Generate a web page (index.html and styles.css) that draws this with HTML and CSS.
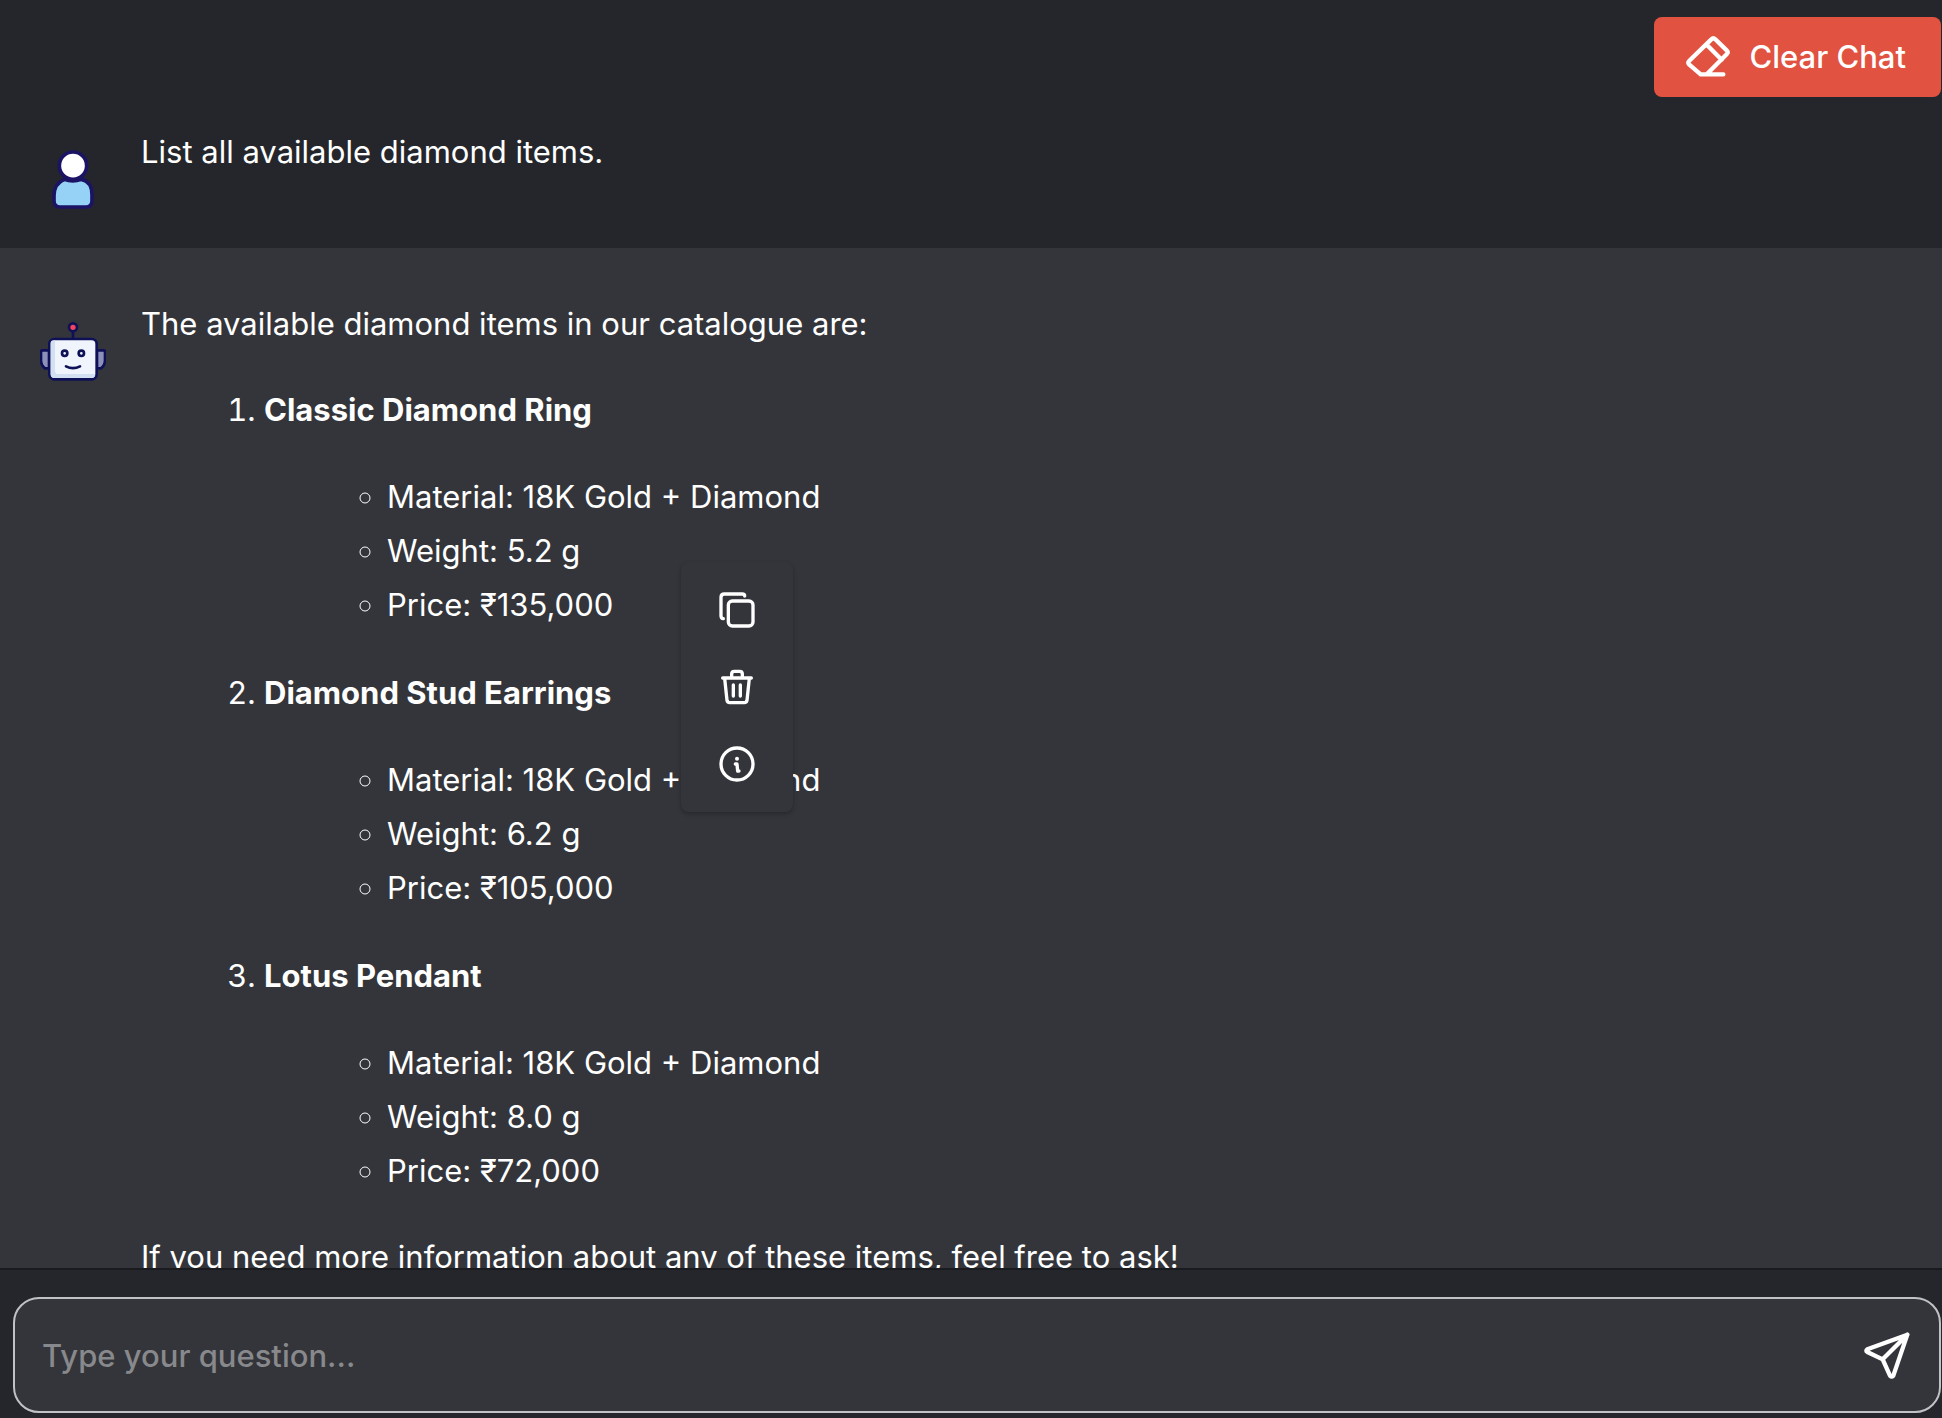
FILE: index.html
```html
<!DOCTYPE html>
<html lang="en">

<head>
    <meta charset="UTF-8">
    <meta name="viewport" content="width=device-width, initial-scale=1.0">
    <title>Catalogue Chat</title>
    <link rel="stylesheet" href="styles.css">
</head>

<body>
    <main class="chat">
        <header class="toolbar">
            <button class="clear" type="button">
                <svg class="clear-icon" viewBox="136 104 132 132" aria-hidden="true">
                    <path d="M248 222H180L146 193Q140 187 146 181L212 117Q218 111 224 117L258 150Q264 156 258 162L199 221M199 134L243 178" />
                </svg>
                Clear Chat
            </button>
        </header>
        <section class="message user">
            <svg class="avatar" viewBox="0 10 198 198" aria-hidden="true">
                <path class="user-body" d="M73 119Q98 128 124 119C145 123 156 142 156 165V184Q156 202 138 202H60Q42 202 42 184V168C42 142 54 127 73 119Z" />
                <ellipse class="user-head" cx="99" cy="78" rx="41" ry="41" />
            </svg>
            <div class="text">
                <p>List all available diamond items.</p>
            </div>
        </section>
        <section class="message bot">
            <svg class="avatar" viewBox="30 45 198 198" aria-hidden="true">
                <g class="bot-lines">
                    <path class="bot-ear" d="M57 151H38Q33 151 33 156V181Q33 196 45 205H57ZM201 151H220Q225 151 225 156V181Q225 196 213 205H201Z" />
                    <path d="M129 94V116" />
                    <circle class="bot-bulb" cx="129" cy="82" r="12" />
                    <rect class="bot-face" x="58" y="117" width="142" height="121" rx="15" />
                    <circle cx="104" cy="160" r="8" />
                    <circle cx="154" cy="160" r="8" />
                    <path d="M108 199Q129 210 150 199" />
                </g>
                <path class="bot-shade" d="M62 128V223Q62 234 74 234H184Q195 234 195 222H84Q75 222 75 212V121Q62 121 62 128Z" />
            </svg>
            <div class="text">
                <p>The available diamond items in our catalogue are:</p>
                <ol>
                    <li>
                        <strong>Classic Diamond Ring</strong>
                        <ul>
                            <li>Material: 18K Gold + Diamond</li>
                            <li>Weight: 5.2 g</li>
                            <li>Price: ₹135,000</li>
                        </ul>
                    </li>
                    <li>
                        <strong>Diamond Stud Earrings</strong>
                        <ul>
                            <li>Material: 18K Gold + Diamond</li>
                            <li>Weight: 6.2 g</li>
                            <li>Price: ₹105,000</li>
                        </ul>
                    </li>
                    <li>
                        <strong>Lotus Pendant</strong>
                        <ul>
                            <li>Material: 18K Gold + Diamond</li>
                            <li>Weight: 8.0 g</li>
                            <li>Price: ₹72,000</li>
                        </ul>
                    </li>
                </ol>
                <p>If you need more information about any of these items, feel free to ask!</p>
            </div>
            <div class="menu">
                <button type="button" aria-label="Copy">
                    <svg viewBox="171 151 120 120" aria-hidden="true">
                        <rect x="205" y="184" width="74" height="75" rx="12" />
                        <path d="M254 169Q254 163 247 163H193Q183 163 183 173V228Q183 236 190 237" />
                    </svg>
                </button>
                <button type="button" aria-label="Delete">
                    <svg viewBox="171 382 120 120" aria-hidden="true">
                        <path d="M188 415H274M194 416L201 482Q202 489 209 489H253Q260 489 261 482L268 416M215 413V403Q215 395 223 395H239Q247 395 247 403V413M220 436V469M241 436V469" />
                    </svg>
                </button>
                <button type="button" aria-label="Info">
                    <svg viewBox="171 613 120 120" aria-hidden="true">
                        <circle cx="231" cy="673" r="48" />
                        <path d="M226 673H231L233 694H237" />
                        <circle class="dot" cx="231" cy="657" r="6" />
                    </svg>
                </button>
            </div>
        </section>
    </main>
    <footer class="footer">
        <form class="ask">
            <input class="ask-input" type="text" placeholder="Type your question..." aria-label="Your question">
            <button class="send" type="button" aria-label="Send">
                <svg viewBox="250 243 144 144" aria-hidden="true">
                    <path d="M383 254L263 298Q257 302 263 306L309 328L331 377Q336 382 341 377ZM309 328L383 254" />
                </svg>
            </button>
        </form>
    </footer>
</body>

</html>
```
FILE: styles.css
```css
* {
    box-sizing: border-box;
    margin: 0;
    padding: 0;
}

body {
    display: flex;
    flex-direction: column;
    height: 100vh;
    background-color: #25262b;
    color: #fff;
    font-family: Inter, "Noto Sans", sans-serif;
    font-size: 31px;
    line-height: 54px;
}

button {
    border: none;
    background: none;
    color: inherit;
    font: inherit;
    cursor: pointer;
}

svg {
    display: block;
    fill: none;
    stroke: #fff;
    stroke-width: 10;
    stroke-linecap: round;
    stroke-linejoin: round;
}

.chat {
    flex: 1;
    min-height: 0;
    overflow: hidden;
}

.toolbar {
    display: flex;
    justify-content: flex-end;
    padding: 17px 1px 28px;
}

.clear {
    display: flex;
    align-items: center;
    gap: 20px;
    height: 80px;
    padding: 0 35px 0 32px;
    border-radius: 8px;
    background-color: #e15241;
    font-weight: 500;
}

.clear-icon {
    width: 44px;
    height: 44px;
    stroke-width: 13;
}

.message {
    position: relative;
    display: flex;
    gap: 35px;
    padding: 0 40px 39px;
}

.bot {
    padding-top: 49px;
    background-color: #34353a;
}

.avatar {
    flex: none;
    width: 66px;
    height: 66px;
    margin-top: 18px;
}

.user-head,
.user-body {
    fill: #fff;
    stroke: #1b1464;
    stroke-width: 11;
}

.user-body {
    fill: #96d2f6;
}

.bot-lines {
    stroke: #0f1157;
    stroke-width: 8;
}

.bot-ear {
    fill: #8d90b8;
}

.bot-bulb {
    fill: #f5455c;
}

.bot-face {
    fill: #f0f4fc;
}

.bot-shade {
    fill: #d3e0f2;
    stroke: none;
}

.text ol {
    margin: 32px 0;
    padding-left: 123px;
}

.text ol > li + li {
    margin-top: 34px;
}

.text ul {
    margin-top: 33px;
    padding-left: 123px;
    list-style: circle;
}

/* message actions, floats over the text */
.menu {
    position: absolute;
    top: 314px;
    left: 681px;
    display: flex;
    flex-direction: column;
    gap: 37px;
    padding: 28px 36px;
    border-radius: 8px;
    background-color: #34353a;
    box-shadow: 0 2px 4px rgba(0, 0, 0, .25);
}

.menu svg {
    width: 40px;
    height: 40px;
}

.dot {
    fill: #fff;
    stroke: none;
}

.footer {
    padding: 27px 1px 5px 13px;
    border-top: 2px solid #1a1b1e;
}

.ask {
    display: flex;
    align-items: center;
    height: 116px;
    padding: 0 28px 0 27px;
    border: 2px solid #c1c2c5;
    border-radius: 26px;
    background-color: #34353a;
}

.ask-input {
    flex: 1;
    min-width: 0;
    height: 100%;
    border: none;
    outline: none;
    background: none;
    color: #fff;
    font: inherit;
    font-weight: 500;
}

.ask-input::placeholder {
    color: #88898c;
}

.send svg {
    width: 48px;
    height: 48px;
    stroke-width: 13;
}
```
